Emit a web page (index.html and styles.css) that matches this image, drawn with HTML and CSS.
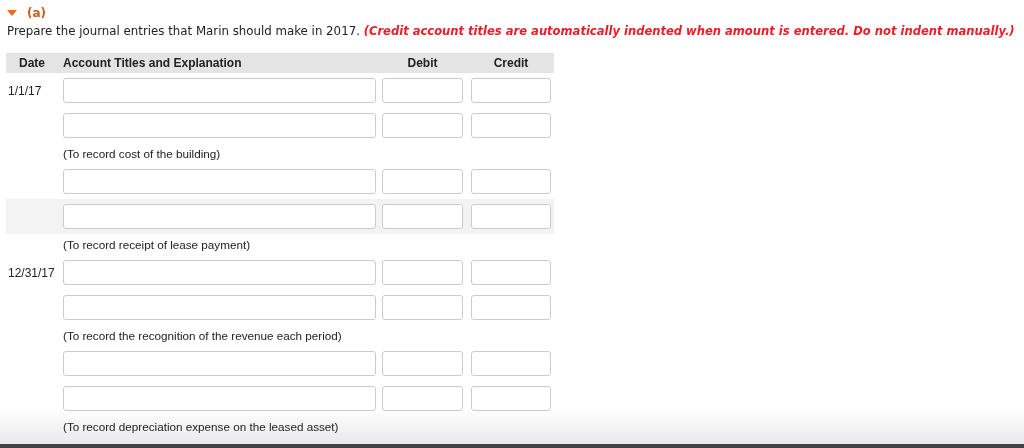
FILE: index.html
```html
<!DOCTYPE html>
<html lang="en">

<head>
    <meta charset="UTF-8">
    <title>Journal Entries</title>
    <link rel="stylesheet" href="styles.css">
</head>

<body>

    <div class="part-title">
        <span class="caret"></span>
        <span class="part-label">(a)</span>
    </div>
    <p class="instructions">Prepare the journal entries that Marin should make in 2017. <em class="warn">(Credit account titles are automatically indented when amount is entered. Do not indent manually.)</em></p>

    <div class="journal">
        <div class="row head">
            <div class="date">Date</div>
            <div class="account">Account Titles and Explanation</div>
            <div class="debit">Debit</div>
            <div class="credit">Credit</div>
        </div>

        <div class="row entry">
            <div class="date">1/1/17</div>
            <div class="account"><input type="text"></div>
            <div class="debit"><input type="text"></div>
            <div class="credit"><input type="text"></div>
        </div>
        <div class="row entry">
            <div class="date"></div>
            <div class="account"><input type="text"></div>
            <div class="debit"><input type="text"></div>
            <div class="credit"><input type="text"></div>
        </div>
        <div class="row note">
            <div class="date"></div>
            <div class="account">(To record cost of the building)</div>
        </div>

        <div class="row entry">
            <div class="date"></div>
            <div class="account"><input type="text"></div>
            <div class="debit"><input type="text"></div>
            <div class="credit"><input type="text"></div>
        </div>
        <div class="row entry hover">
            <div class="date"></div>
            <div class="account"><input type="text"></div>
            <div class="debit"><input type="text"></div>
            <div class="credit"><input type="text"></div>
        </div>
        <div class="row note">
            <div class="date"></div>
            <div class="account">(To record receipt of lease payment)</div>
        </div>

        <div class="row entry">
            <div class="date">12/31/17</div>
            <div class="account"><input type="text"></div>
            <div class="debit"><input type="text"></div>
            <div class="credit"><input type="text"></div>
        </div>
        <div class="row entry">
            <div class="date"></div>
            <div class="account"><input type="text"></div>
            <div class="debit"><input type="text"></div>
            <div class="credit"><input type="text"></div>
        </div>
        <div class="row note">
            <div class="date"></div>
            <div class="account">(To record the recognition of the revenue each period)</div>
        </div>

        <div class="row entry">
            <div class="date"></div>
            <div class="account"><input type="text"></div>
            <div class="debit"><input type="text"></div>
            <div class="credit"><input type="text"></div>
        </div>
        <div class="row entry">
            <div class="date"></div>
            <div class="account"><input type="text"></div>
            <div class="debit"><input type="text"></div>
            <div class="credit"><input type="text"></div>
        </div>
        <div class="row note">
            <div class="date"></div>
            <div class="account">(To record depreciation expense on the leased asset)</div>
        </div>
    </div>

    <div class="bottom-shade"></div>

</body>

</html>
```

FILE: styles.css
```css
body {
    font-family: "DejaVu Sans", Verdana, sans-serif;
    margin: 0;
    padding: 0;
    color: #222;
    background: #fff;
}

.part-title {
    display: flex;
    align-items: center;
    gap: 10px;
    padding: 6px 0 0 7px;
    height: 14px;
}

.caret {
    width: 0;
    height: 0;
    border-left: 5px solid transparent;
    border-right: 5px solid transparent;
    border-top: 6px solid #ef6a1c;
}

.part-label {
    color: #cf5a1e;
    font-weight: bold;
    font-size: 12px;
}

.instructions {
    margin: 0;
    padding: 3px 0 0 7px;
    font-size: 11.8px;
    line-height: 16px;
    white-space: nowrap;
}

.warn {
    color: #ef1c27;
    font-weight: bold;
    font-size: 11.55px;
}

.journal {
    margin: 14px 0 0 6px;
    width: 548px;
    font-family: "Liberation Sans", Arial, sans-serif;
    font-size: 11.7px;
}

.row {
    display: grid;
    grid-template-columns: 51px 313px 81px 82px;
    column-gap: 6px;
    align-items: center;
}

.row .credit {
    padding-left: 2px;
}

.head {
    height: 20px;
    background-color: #e4e4e4;
    font-weight: bold;
    font-size: 12px;
}

.head .date {
    padding-left: 13px;
}

.head .debit,
.head .credit {
    text-align: center;
}

.entry {
    height: 35px;
}

.entry .date {
    padding-left: 2px;
    font-size: 12px;
}

.hover {
    background-color: #f3f3f3;
}

.note {
    height: 21px;
}

input {
    display: block;
    box-sizing: border-box;
    width: 100%;
    height: 25px;
    margin: 0;
    border: 1px solid #cbcbcb;
    border-radius: 3px;
    background: #fff;
}

/* bandeau du bas, derrière le contenu */
.bottom-shade {
    position: fixed;
    left: 0;
    right: 0;
    bottom: 0;
    z-index: -1;
    height: 36px;
    background: linear-gradient(rgba(255, 255, 255, 0), #e9e9e9);
    border-bottom: 4px solid #434348;
    pointer-events: none;
}
```
